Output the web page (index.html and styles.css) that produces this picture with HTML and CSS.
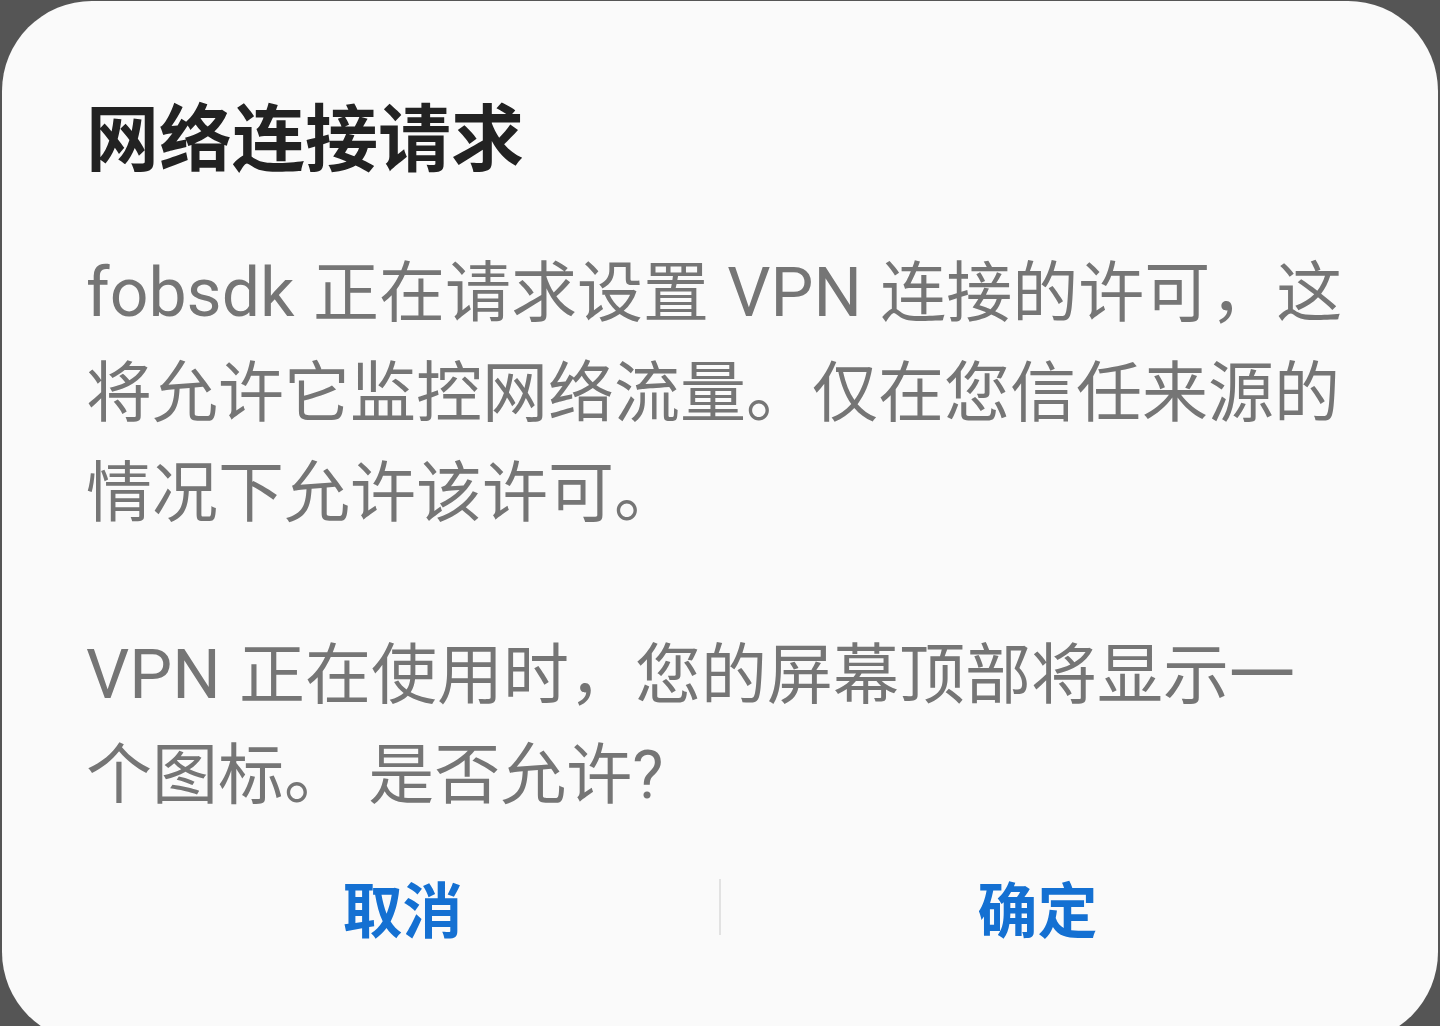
FILE: index.html
```html
<!DOCTYPE html>
<html lang="zh-CN">
<head>
<meta charset="utf-8">
<title>网络连接请求</title>
<link rel="stylesheet" href="styles.css">
</head>
<body>
<div class="dialog">
  <h1 class="title">网络连接请求</h1>
  <p class="message"><span class="latin">fobsdk</span> 正在请求设置 <span class="latin">VPN</span> 连接的许可，这将允许它监控网络流量。仅在您信任来源的情况下允许该许可。</p>
  <p class="message second"><span class="latin">VPN</span> 正在使用时，您的屏幕顶部将显示一个图标。 是否允许?</p>
  <div class="actions">
    <button class="action">取消</button>
    <span class="divider"></span>
    <button class="action">确定</button>
  </div>
</div>
</body>
</html>
```

FILE: styles.css
```css
html, body {
  margin: 0;
  padding: 0;
  height: 1026px;
  overflow: hidden;
  background: #555555;
}

body {
  padding-top: 1px;
  box-sizing: border-box;
}

.dialog {
  margin: 0 2px;
  height: 1041px;
  box-sizing: border-box;
  background: #fafafa;
  border-radius: 90px;
  padding: 89px 88px 0 84px;
  display: flex;
  flex-direction: column;
}

.title {
  margin: 0;
  font-family: Roboto, "Noto Sans CJK SC", sans-serif;
  font-size: 73px;
  font-weight: 700;
  line-height: 100px;
  color: #222222;
}

.message {
  margin: 53px 0 0;
  font-family: Roboto, "Noto Sans CJK SC", sans-serif;
  font-size: 66px;
  line-height: 100px;
  word-spacing: 2px;
  color: #757575;
}

.latin {
  font-size: 68px;
}

.message.second {
  margin-top: 81px;
}

.actions {
  margin: 41px -4px 0 0;
  display: flex;
  align-items: center;
  height: 80px;
}

.action {
  flex: 1;
  border: 0;
  background: transparent;
  padding: 0;
  font-family: "Noto Sans CJK SC", sans-serif;
  font-size: 60px;
  font-weight: 700;
  line-height: 80px;
  color: #1470d2;
}

.divider {
  width: 2px;
  height: 56px;
  background: #e2e2e2;
}
```
